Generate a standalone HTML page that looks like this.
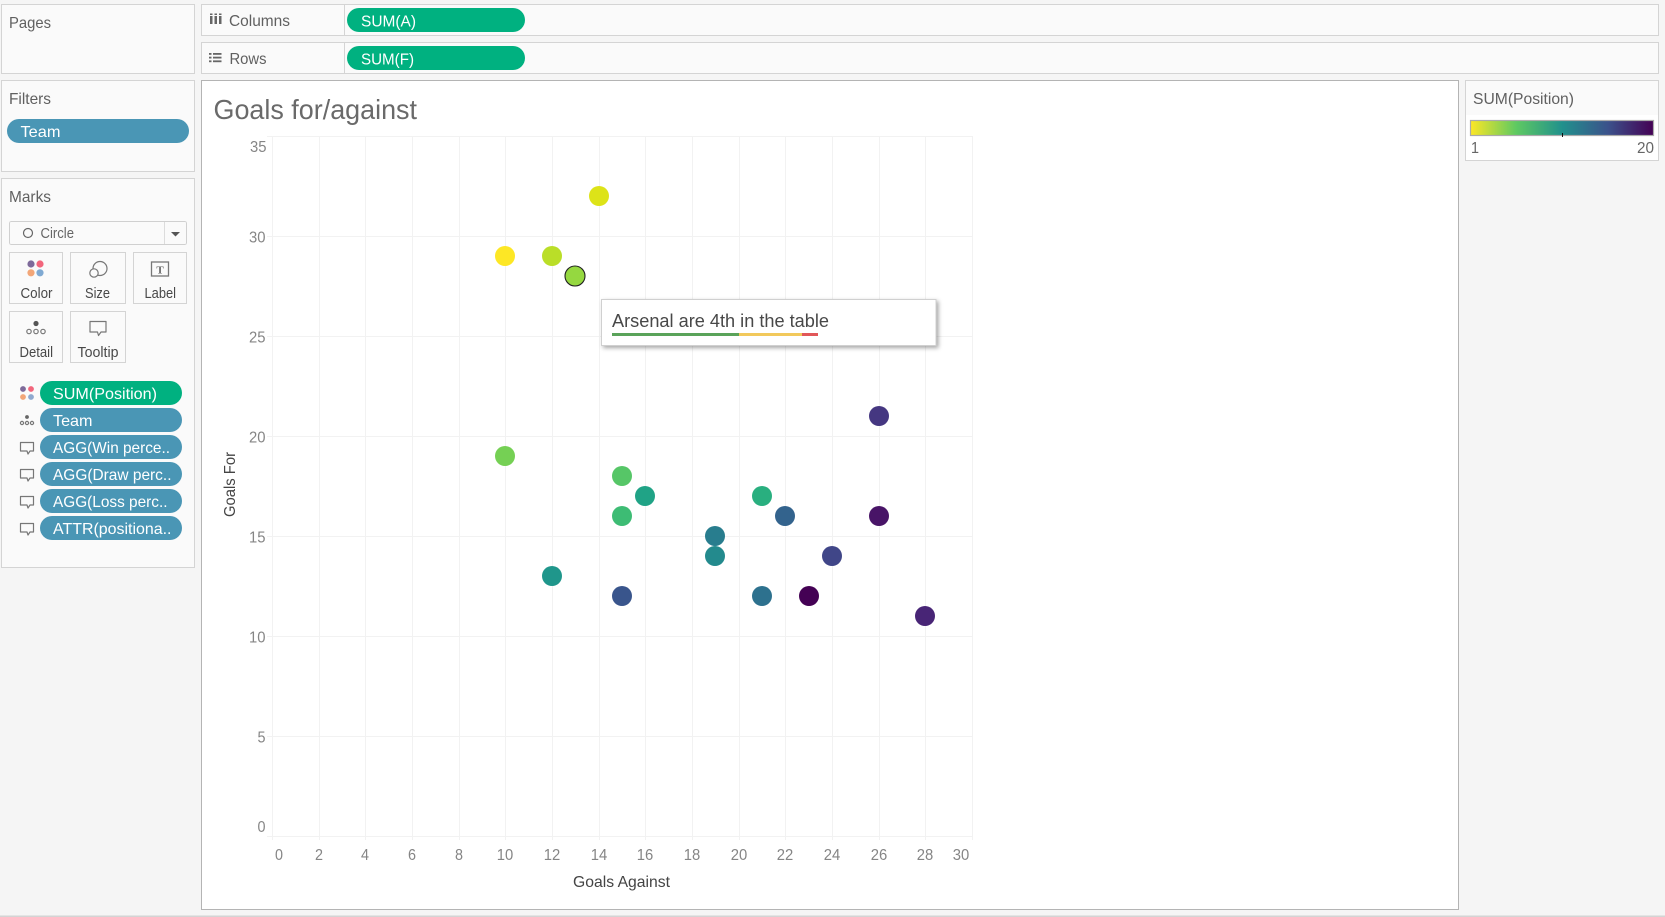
<!DOCTYPE html>
<html lang="en"><head><meta charset="utf-8"><title>Goals for/against</title>
<style>
html,body{margin:0;padding:0;background:#f5f5f5;width:1665px;height:917px;overflow:hidden}
svg{display:block;position:absolute;left:0;top:0}
text{font-family:"Liberation Sans",sans-serif;white-space:pre}
.l{font-size:16px;fill:#606060}
.p{font-size:16px;fill:#fff}
.c{font-size:15px;fill:#484848}
.ax{font-size:16px;fill:#858585}
.g{stroke:#f2f2f2;stroke-width:1;fill:none;shape-rendering:crispEdges}
.b{fill:#fafafa;stroke:#d4d4d4;stroke-width:1;shape-rendering:crispEdges}
.ic{fill:none;stroke:#777;stroke-width:1.2}
</style></head><body>
<svg width="1665" height="917" viewBox="0 0 1665 917" xmlns="http://www.w3.org/2000/svg">
<rect width="1665" height="917" fill="#f5f5f5"/>
<rect x="0" y="915.5" width="1665" height="1.5" fill="#d4d4d4"/>

<!-- left panels -->
<rect class="b" x="1.5" y="4.5" width="193" height="69"/>
<text class="l" x="9" y="28" textLength="42" lengthAdjust="spacingAndGlyphs">Pages</text>
<rect class="b" x="1.5" y="80.5" width="193" height="91"/>
<text class="l" x="9" y="104" textLength="42" lengthAdjust="spacingAndGlyphs">Filters</text>
<rect x="7" y="119" width="182" height="24" rx="12" fill="#4a96b5"/>
<text class="p" x="20.5" y="137" textLength="40" lengthAdjust="spacingAndGlyphs">Team</text>
<rect class="b" x="1.5" y="178.5" width="193" height="389"/>
<text class="l" x="9" y="202" textLength="42" lengthAdjust="spacingAndGlyphs">Marks</text>

<!-- mark type -->
<rect x="9.5" y="221.5" width="177" height="23" rx="2" fill="#fafafa" stroke="#d0d0d0" shape-rendering="crispEdges"/>
<line x1="164.5" y1="222" x2="164.5" y2="244" stroke="#dcdcdc" shape-rendering="crispEdges"/>
<circle cx="28" cy="233" r="4.5" fill="none" stroke="#666" stroke-width="1.2"/>
<text class="c" x="40.5" y="238" textLength="33.5" lengthAdjust="spacingAndGlyphs" style="fill:#666">Circle</text>
<path d="M171 232h9l-4.500 4.500z" fill="#555"/>

<!-- mark cards -->
<g fill="#fafafa" stroke="#d4d4d4" shape-rendering="crispEdges">
<rect x="9.5" y="252.5" width="53" height="51"/><rect x="70.5" y="252.5" width="55" height="51"/><rect x="133.5" y="252.5" width="53" height="51"/>
<rect x="9.5" y="311.5" width="53" height="51"/><rect x="70.5" y="311.5" width="55" height="51"/>
</g>
<circle cx="31" cy="264" r="3.600" fill="#7e6a9a"/><circle cx="40" cy="264" r="3.600" fill="#f2667c"/>
<circle cx="31" cy="272.800" r="3.600" fill="#f2a678"/><circle cx="40" cy="272.800" r="3.600" fill="#7fa9d2"/>
<circle cx="100" cy="268.500" r="7" class="ic"/><circle cx="94" cy="273" r="4.200" fill="#fafafa" stroke="#777" stroke-width="1.200"/>
<rect x="151.500" y="262" width="17" height="14" fill="none" stroke="#777" stroke-width="1.300"/>
<text x="160" y="273.500" text-anchor="middle" style="font-family:'Liberation Serif',serif;font-size:11px;font-weight:bold" fill="#666">T</text>
<text class="c" x="20.500" y="298" textLength="32" lengthAdjust="spacingAndGlyphs">Color</text>
<text class="c" x="85" y="298" textLength="25" lengthAdjust="spacingAndGlyphs">Size</text>
<text class="c" x="144.500" y="298" textLength="31.500" lengthAdjust="spacingAndGlyphs">Label</text>
<circle cx="36" cy="323.500" r="2.600" fill="#555"/>
<circle cx="29" cy="331.500" r="2.200" class="ic" stroke-width="1"/><circle cx="36" cy="331.500" r="2.200" class="ic" stroke-width="1"/><circle cx="43" cy="331.500" r="2.200" class="ic" stroke-width="1"/>
<path d="M90 321.500h16v10.500h-5l-2.500 3.500-1-3.500H90z" class="ic" stroke-linejoin="round"/>
<text class="c" x="19.500" y="357" textLength="33.500" lengthAdjust="spacingAndGlyphs">Detail</text>
<text class="c" x="77.500" y="357" textLength="41" lengthAdjust="spacingAndGlyphs">Tooltip</text>

<!-- mark pills -->
<rect x="40" y="381" width="142" height="24" rx="12" fill="#00b180"/>
<rect x="40" y="408" width="142" height="24" rx="12" fill="#4a96b5"/>
<rect x="40" y="435" width="142" height="24" rx="12" fill="#4a96b5"/>
<rect x="40" y="462" width="142" height="24" rx="12" fill="#4a96b5"/>
<rect x="40" y="489" width="142" height="24" rx="12" fill="#4a96b5"/>
<rect x="40" y="516" width="142" height="24" rx="12" fill="#4a96b5"/>
<text class="p" x="53" y="399" textLength="104" lengthAdjust="spacingAndGlyphs">SUM(Position)</text>
<text class="p" x="53" y="426" textLength="39.500" lengthAdjust="spacingAndGlyphs">Team</text>
<text class="p" x="53" y="453" textLength="117" lengthAdjust="spacingAndGlyphs">AGG(Win perce..</text>
<text class="p" x="53" y="480" textLength="118.500" lengthAdjust="spacingAndGlyphs">AGG(Draw perc..</text>
<text class="p" x="53" y="507" textLength="114.500" lengthAdjust="spacingAndGlyphs">AGG(Loss perc..</text>
<text class="p" x="53" y="534" textLength="118.500" lengthAdjust="spacingAndGlyphs">ATTR(positiona..</text>
<circle cx="23" cy="389" r="2.900" fill="#7e6a9a"/><circle cx="31" cy="389" r="2.900" fill="#f2667c"/>
<circle cx="23" cy="397" r="2.900" fill="#f2a678"/><circle cx="31" cy="397" r="2.900" fill="#8fa9cf"/>
<circle cx="27" cy="417" r="1.900" fill="#666"/>
<circle cx="22" cy="423" r="1.600" class="ic" stroke-width=".9"/><circle cx="27" cy="423" r="1.600" class="ic" stroke-width=".9"/><circle cx="32" cy="423" r="1.600" class="ic" stroke-width=".9"/>
<g class="ic" stroke-linejoin="round">
<path d="M20.500 442.500h13v8.500h-3.500l-2 3-1-3h-6.500z"/>
<path d="M20.500 469.500h13v8.500h-3.500l-2 3-1-3h-6.500z"/>
<path d="M20.500 496.500h13v8.500h-3.500l-2 3-1-3h-6.500z"/>
<path d="M20.500 523.500h13v8.500h-3.500l-2 3-1-3h-6.500z"/>
</g>

<!-- shelves -->
<rect class="b" x="201.500" y="4.500" width="1457" height="31"/>
<line x1="344.500" y1="5" x2="344.500" y2="35" stroke="#d4d4d4" shape-rendering="crispEdges"/>
<rect x="347" y="8" width="178" height="24" rx="12" fill="#00b180"/>
<text class="p" x="361" y="26.500" textLength="55" lengthAdjust="spacingAndGlyphs">SUM(A)</text>
<g fill="#666"><rect x="210" y="16" width="2.500" height="8"/><rect x="214.500" y="16" width="2.500" height="8"/><rect x="219" y="16" width="2.500" height="8"/>
<rect x="210" y="13.500" width="2.500" height="1.500"/><rect x="214.500" y="13.500" width="2.500" height="1.500"/><rect x="219" y="13.500" width="2.500" height="1.500"/></g>
<text class="l" x="229" y="26" textLength="61" lengthAdjust="spacingAndGlyphs">Columns</text>

<rect class="b" x="201.500" y="42.500" width="1457" height="31"/>
<line x1="344.500" y1="43" x2="344.500" y2="73" stroke="#d4d4d4" shape-rendering="crispEdges"/>
<rect x="347" y="46" width="178" height="24" rx="12" fill="#00b180"/>
<text class="p" x="361" y="64.500" textLength="53" lengthAdjust="spacingAndGlyphs">SUM(F)</text>
<g fill="#666"><rect x="209" y="53" width="2.500" height="1.800"/><rect x="213" y="53" width="8.500" height="1.800"/><rect x="209" y="56.700" width="2.500" height="1.800"/><rect x="213" y="56.700" width="8.500" height="1.800"/><rect x="209" y="60.400" width="2.500" height="1.800"/><rect x="213" y="60.400" width="8.500" height="1.800"/></g>
<text class="l" x="229.500" y="64" textLength="37" lengthAdjust="spacingAndGlyphs">Rows</text>

<!-- chart frame -->
<rect x="201.500" y="80.500" width="1257" height="829" fill="#fff" stroke="#b4b4b4" shape-rendering="crispEdges"/>
<text x="213.500" y="119" style="font-size:28px" fill="#6a6a6a" textLength="203.500" lengthAdjust="spacingAndGlyphs">Goals for/against</text>

<!-- grid -->
<g class="g">
<path d="M272.500 136V840M319.500 136V840M365.500 136V840M412.500 136V840M459.500 136V840M505.500 136V840M552.500 136V840M599.500 136V840M645.500 136V840M692.500 136V840M739.500 136V840M785.500 136V840M832.500 136V840M879.500 136V840M925.500 136V840M972.500 136V840"/>
<path d="M267 136.500H972M267 236.500H972M267 336.500H972M267 436.500H972M267 536.500H972M267 636.500H972M267 736.500H972M267 836.500H972"/>
</g>

<!-- y labels -->
<g class="ax" text-anchor="end">
<text x="266.500" y="152" textLength="16.500" lengthAdjust="spacingAndGlyphs">35</text>
<text x="265.500" y="242.500" textLength="16.500" lengthAdjust="spacingAndGlyphs">30</text>
<text x="265.500" y="342.500" textLength="16.500" lengthAdjust="spacingAndGlyphs">25</text>
<text x="265.500" y="442.500" textLength="16.500" lengthAdjust="spacingAndGlyphs">20</text>
<text x="265.500" y="542.500" textLength="16.500" lengthAdjust="spacingAndGlyphs">15</text>
<text x="265.500" y="642.500" textLength="16.500" lengthAdjust="spacingAndGlyphs">10</text>
<text x="265.500" y="742.500" textLength="8" lengthAdjust="spacingAndGlyphs">5</text>
<text x="265.500" y="832" textLength="8" lengthAdjust="spacingAndGlyphs">0</text>
</g>
<!-- x labels -->
<g class="ax" text-anchor="middle">
<text x="279" y="860" textLength="8" lengthAdjust="spacingAndGlyphs">0</text><text x="319" y="860" textLength="8" lengthAdjust="spacingAndGlyphs">2</text><text x="365" y="860" textLength="8" lengthAdjust="spacingAndGlyphs">4</text><text x="412" y="860" textLength="8" lengthAdjust="spacingAndGlyphs">6</text><text x="459" y="860" textLength="8" lengthAdjust="spacingAndGlyphs">8</text>
<text x="505" y="860" textLength="16.500" lengthAdjust="spacingAndGlyphs">10</text><text x="552" y="860" textLength="16.500" lengthAdjust="spacingAndGlyphs">12</text><text x="599" y="860" textLength="16.500" lengthAdjust="spacingAndGlyphs">14</text><text x="645" y="860" textLength="16.500" lengthAdjust="spacingAndGlyphs">16</text><text x="692" y="860" textLength="16.500" lengthAdjust="spacingAndGlyphs">18</text><text x="739" y="860" textLength="16.500" lengthAdjust="spacingAndGlyphs">20</text><text x="785" y="860" textLength="16.500" lengthAdjust="spacingAndGlyphs">22</text><text x="832" y="860" textLength="16.500" lengthAdjust="spacingAndGlyphs">24</text><text x="879" y="860" textLength="16.500" lengthAdjust="spacingAndGlyphs">26</text><text x="925" y="860" textLength="16.500" lengthAdjust="spacingAndGlyphs">28</text><text x="961" y="860" textLength="16.500" lengthAdjust="spacingAndGlyphs">30</text>
</g>
<text x="573" y="887" style="font-size:16px" fill="#444" textLength="97" lengthAdjust="spacingAndGlyphs">Goals Against</text>
<text transform="translate(235,517) rotate(-90)" style="font-size:16px" fill="#444" textLength="65" lengthAdjust="spacingAndGlyphs">Goals For</text>

<!-- marks -->
<circle cx="505" cy="256" r="10" fill="#fde725"/>
<circle cx="599" cy="196" r="10" fill="#dde318"/>
<circle cx="552" cy="256" r="10" fill="#bade28"/>
<circle cx="505" cy="456" r="10" fill="#75d054"/>
<circle cx="622" cy="476" r="10" fill="#56c667"/>
<circle cx="622" cy="516" r="10" fill="#3dbc74"/>
<circle cx="762" cy="496" r="10" fill="#29af7f"/>
<circle cx="645" cy="496" r="10" fill="#20a386"/>
<circle cx="552" cy="576" r="10" fill="#1f968b"/>
<circle cx="715" cy="556" r="10" fill="#238a8d"/>
<circle cx="715" cy="536" r="10" fill="#287d8e"/>
<circle cx="762" cy="596" r="10" fill="#2d718e"/>
<circle cx="785" cy="516" r="10" fill="#33638d"/>
<circle cx="622" cy="596" r="10" fill="#39558c"/>
<circle cx="832" cy="556" r="10" fill="#404688"/>
<circle cx="879" cy="416" r="10" fill="#453781"/>
<circle cx="925" cy="616" r="10" fill="#482576"/>
<circle cx="879" cy="516" r="10" fill="#481467"/>
<circle cx="809" cy="596" r="10" fill="#440154"/>
<circle cx="575" cy="276" r="10" fill="#95d840" stroke="#222" stroke-width="1.100"/>

<!-- tooltip -->
<rect x="601.500" y="299.500" width="334.500" height="46" fill="#fff" stroke="#d0d0d0" shape-rendering="crispEdges" style="filter:drop-shadow(2px 2px 2px rgba(0,0,0,.35))"/>
<text x="612" y="327" style="font-size:18px" fill="#484848" textLength="217" lengthAdjust="spacingAndGlyphs">Arsenal are 4th in the table</text>
<rect x="612" y="333" width="127" height="3" fill="#5aa35a"/>
<rect x="739" y="333" width="63" height="3" fill="#f2c95c"/>
<rect x="802" y="333" width="16" height="3" fill="#e15759"/>

<!-- legend -->
<defs><linearGradient id="v" x1="0" x2="1" y1="0" y2="0">
<stop offset="0" stop-color="#fde725"/><stop offset=".25" stop-color="#5ec962"/><stop offset=".5" stop-color="#21918c"/><stop offset=".75" stop-color="#3b528b"/><stop offset="1" stop-color="#440154"/>
</linearGradient></defs>
<rect x="1465.500" y="80.500" width="193" height="80" fill="#fff" stroke="#d4d4d4" shape-rendering="crispEdges"/>
<rect x="1466" y="81" width="192" height="34" fill="#fafafa"/>
<text class="l" x="1473" y="104" textLength="101" lengthAdjust="spacingAndGlyphs">SUM(Position)</text>
<rect x="1470.500" y="120.500" width="183" height="15" fill="url(#v)" stroke="#aaa" stroke-width="1.200"/>
<rect x="1562" y="133" width="1" height="4" fill="#111"/>
<text x="1471" y="153" style="font-size:16px" fill="#666" textLength="8" lengthAdjust="spacingAndGlyphs">1</text>
<text x="1654" y="153" style="font-size:16px" fill="#666" text-anchor="end" textLength="17" lengthAdjust="spacingAndGlyphs">20</text>
</svg>
</body></html>
